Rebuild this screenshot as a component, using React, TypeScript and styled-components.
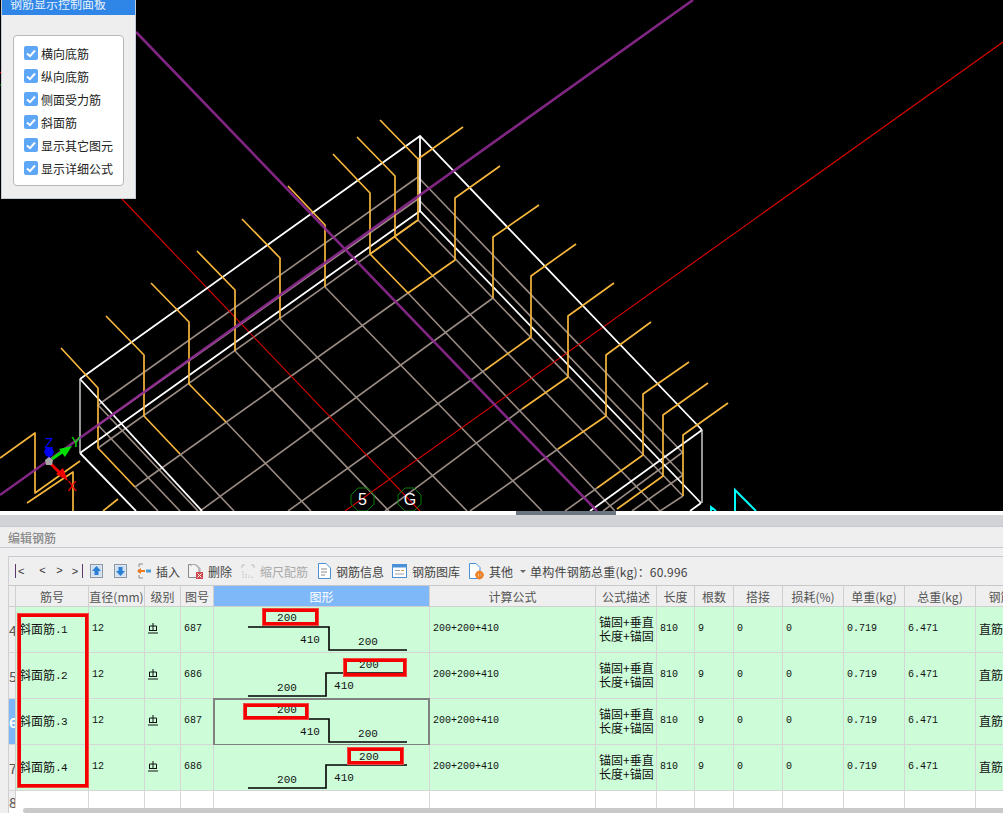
import React from "react";
import styled, { createGlobalStyle } from "styled-components";

const GlobalStyle = createGlobalStyle`
  html, body {
    margin: 0;
    padding: 0;
    height: 813px;
    overflow: hidden;
    background: #efefef;
    font-family: "Noto Sans CJK SC", "Liberation Sans", sans-serif;
  }
`;

const Page = styled.div`
  width: 1003px;
  height: 813px;
  overflow: hidden;
  display: flex;
  flex-direction: column;
`;

const Viewport = styled.div`
  position: relative;
  height: 511px;
  background: #000;
  flex: none;

  svg {
    display: block;
  }
`;

const ControlPanel = styled.div`
  position: absolute;
  left: 1px;
  top: 0;
  width: 135px;
  height: 199px;
  box-sizing: border-box;
  background: #eeeeee;
  border: 1px solid #c4cad2;
  border-top: none;
  display: flex;
  flex-direction: column;
`;

const PanelTitle = styled.div`
  height: 15px;
  flex: none;
  background: #2f86e6;
  color: #e8f2fc;
  font-size: 12px;
  line-height: 7px;
  padding-left: 8px;
  overflow: hidden;
`;

const OptionGroup = styled.div`
  margin: 20px 11px 0 11px;
  height: 151px;
  box-sizing: border-box;
  background: #fff;
  border: 1px solid #b8b8b8;
  border-radius: 4px;
  padding: 10px 0 0 10px;
  display: flex;
  flex-direction: column;
  gap: 9px;
`;

const OptionRow = styled.div`
  display: flex;
  align-items: center;
  gap: 3px;
  height: 14px;
  font-size: 12px;
  color: #222;
`;

const CheckBox = styled.span`
  width: 14px;
  height: 14px;
  border-radius: 2px;
  background: #5ea6f6;
  display: flex;
  align-items: center;
  justify-content: center;
`;

const Splitter = styled.div`
  height: 4px;
  flex: none;
  background: #fff;
  padding-left: 516px;
`;

const SplitterThumb = styled.div`
  width: 100px;
  height: 4px;
  background: #6c7680;
`;

const TitleGutter = styled.div`
  height: 11px;
  flex: none;
  background: #d2d3d7;
  border-bottom: 1px solid #c6c7cb;
`;

const EditorTitle = styled.div`
  height: 21px;
  flex: none;
  box-sizing: border-box;
  padding-left: 8px;
  font-size: 12px;
  line-height: 21px;
  font-weight: 500;
  color: #8a8a8a;
  border-bottom: 1px solid #c8c8d0;
`;

const Editor = styled.div`
  flex: 1;
  margin: 8px 0 0 8px;
  background: #efefef;
  border-top: 1px solid #c8c8d0;
  border-left: 1px solid #d0d0d4;
  position: relative;
  overflow: hidden;
`;

const Toolbar = styled.div`
  height: 28px;
  display: flex;
  align-items: center;
  font-size: 12px;
  color: #444;
  white-space: nowrap;
`;

const NavGroup = styled.div`
  display: flex;
  width: 72px;
  margin-left: 6px;
  font-family: "Liberation Sans", sans-serif;
  font-size: 11px;
  color: #333;
`;

const NavButton = styled.span`
  width: 17px;
  text-align: center;

  &:first-child {
    border-left: 1px solid #5a3a6a;
    line-height: 14px;
    width: 12px;
    text-align: left;
    padding-left: 2px;
    margin-right: 4px;
  }

  &:last-child {
    width: 14px;
    border-right: 1px solid #5a3a6a;
    line-height: 14px;
  }
`;

const ToolButton = styled.span<{ $gap: number; $disabled?: boolean }>`
  display: inline-flex;
  align-items: center;
  margin-left: ${(p) => p.$gap}px;
  gap: 5px;
  color: ${(p) => (p.$disabled ? "#aaaaaa" : "#444")};

  svg {
    flex: none;
    display: block;
  }
`;

const Caret = styled.span`
  width: 0;
  height: 0;
  margin-left: 7px;
  border-left: 3px solid transparent;
  border-right: 3px solid transparent;
  border-top: 3px solid #666;
`;

const WeightLabel = styled.span`
  margin-left: 4px;
  letter-spacing: 0.2px;
`;

const Table = styled.div`
  border-top: 1px solid #c8c8c8;
  width: 1040px;
`;

const columns = "7px 73px 56px 36px 33px 216px 166px 61px 38px 39px 49px 61px 61px 71px 50px";

const Row = styled.div<{ $height: number; $header?: boolean }>`
  display: grid;
  grid-template-columns: ${columns};
  height: ${(p) => p.$height}px;
  border-bottom: ${(p) => (p.$header ? "1px solid #cfcfcf" : "1px solid #d6d6d6")};
  box-sizing: content-box;
`;

const HeadCell = styled.div<{ $active?: boolean }>`
  box-sizing: border-box;
  display: flex;
  align-items: center;
  justify-content: center;
  font-size: 12px;
  white-space: nowrap;
  overflow: hidden;
  color: ${(p) => (p.$active ? "#fff" : "#555")};
  background: ${(p) => (p.$active ? "#7fb8f8" : "#efefef")};
  border-right: 1px solid #cfcfcf;
`;

const RowNumber = styled.div<{ $active?: boolean }>`
  box-sizing: border-box;
  display: flex;
  align-items: center;
  font-size: 14px;
  font-weight: ${(p) => (p.$active ? 700 : 400)};
  overflow: hidden;
  color: ${(p) => (p.$active ? "#fff" : "#555")};
  background: ${(p) => (p.$active ? "#7fb8f8" : "#efefef")};
  border-right: 1px solid #cfcfcf;
`;

const Cell = styled.div<{ $empty?: boolean; $mono?: boolean }>`
  box-sizing: border-box;
  position: relative;
  display: flex;
  align-items: center;
  padding: 0 0 2px 3px;
  font-family: ${(p) =>
    p.$mono ? '"Liberation Mono", monospace' : '"Noto Sans CJK SC", sans-serif'};
  font-size: ${(p) => (p.$mono ? "10px" : "12px")};
  line-height: 14px;
  color: #111;
  white-space: nowrap;
  background: ${(p) => (p.$empty ? "#fff" : "#ccfdd8")};
  border-right: 1px solid #d6d6d6;
`;

const ShapeCell = styled(Cell)`
  padding: 0;

  svg {
    position: absolute;
    left: 0;
    top: 0;
  }
`;

const SelectedFrame = styled.div`
  position: absolute;
  left: -1px;
  top: -1px;
  right: -1px;
  bottom: -2px;
  border: 2px solid #808080;
`;

const NameDot = styled.span`
  font-family: "Liberation Mono", monospace;
  font-size: 11px;
  letter-spacing: -0.6px;
  position: relative;
  top: 1px;
`;

const RedMark = styled.div<{ $x: number; $y: number; $w: number; $h: number; $bw: number }>`
  position: absolute;
  left: ${(p) => p.$x}px;
  top: ${(p) => p.$y}px;
  width: ${(p) => p.$w}px;
  height: ${(p) => p.$h}px;
  box-sizing: border-box;
  border: ${(p) => p.$bw}px solid #f40000;
  outline: 1px solid rgba(240, 120, 110, 0.6);
  outline-offset: -1px;
`;

const ScrollTrack = styled.div`
  position: absolute;
  left: 0;
  right: 0;
  bottom: 0;
  height: 5px;
  background: #fff;
`;

const ScrollThumb = styled.div`
  height: 5px;
  margin-left: 14px;
  background: #c9c9c9;
  border-radius: 3px 0 0 3px;
`;

const GRAY = [
  "418,177 98,405",
  "418,199 98,425",
  "418,220 98,448",
  "408,293 135,487",
  "493,298 200,511",
  "485,370 288,511",
  "522,409 385,511",
  "558,449 470,511",
  "597,488 565,511",
  "683,452 603,511",
  "683,475 632,511",
  "683,496 660,511",
  "135,487 158,511",
  "180,454 234,511",
  "226,422 311,511",
  "235,351 389,511",
  "280,319 467,511",
  "325,287 542,511",
  "408,293 615,511",
  "432,275 660,511",
  "418,177 683,453",
  "418,199 683,475",
  "418,220 683,496",
  "98,405 198,511",
  "98,425 180,511",
];

const WHITE = [
  "80,379 420,136 702,430",
  "80,453 420,211 701,503",
  "420,136 420,211",
  "80,379 202,511",
  "80,453 136,511",
  "702,430 590,511",
  "701,503 690,511",
];

const ORANGE = [
  "61,348 98,388 98,448 135,487",
  "106,316 144,355 144,416 180,454",
  "151,283 189,322 189,384 226,422",
  "197,251 235,290 235,351",
  "242,219 280,258 280,319",
  "288,186 325,225 325,287",
  "333,154 370,193 370,254 408,293",
  "357,137 395,176 395,237 432,275",
  "380,120 418,159 418,220 370,254",
  "463,127 418,159",
  "500,166 455,198 455,260 408,293",
  "539,205 493,237 493,298",
  "576,244 531,276 531,337 485,370",
  "614,283 568,316 568,377 522,409",
  "651,322 606,355 606,416 558,449",
  "689,362 643,394 643,455 597,488",
  "708,383 663,415 663,476 617,509",
  "728,403 683,435 683,496",
  "0,458 35,433 35,493 80,461",
  "27,503 73,472 73,511",
  "103,511 118,499",
];

const Scene = () => (
  <svg width={1003} height={511} viewBox="0 0 1003 511" fill="none">
    <g stroke="#9a8c84" strokeWidth={1.6}>
      {GRAY.map((d) => (
        <polyline key={d} points={d} />
      ))}
    </g>
    <g stroke="#e00000" strokeWidth={1.1}>
      <line x1={122} y1={199} x2={420} y2={511} />
      <line x1={1003} y1={42} x2={345} y2={511} />
      <line x1={0} y1={72} x2={2} y2={74} />
    </g>
    <line x1={0} y1={85} x2={2} y2={85} stroke="#00b000" />
    <g stroke="#fff" strokeWidth={1.8}>
      {WHITE.map((d) => (
        <polyline key={d} points={d} />
      ))}
    </g>
    <g stroke="#e8e8e8" strokeWidth={1.3}>
      <line x1={80} y1={379} x2={80} y2={453} />
      <line x1={702} y1={430} x2={702} y2={503} />
    </g>
    <g stroke="#f6b63c" strokeWidth={1.7} strokeLinejoin="round">
      {ORANGE.map((d) => (
        <polyline key={d} points={d} />
      ))}
    </g>
    <g stroke="#8f2a92" strokeWidth={2.6} opacity={0.9}>
      <line x1={0} y1={495} x2={693} y2={0} />
      <line x1={136} y1={32} x2={597} y2={511} />
    </g>
    <g stroke="#00ffff" strokeWidth={2}>
      <polyline points="735,511 735,490 756,511" />
      <polyline points="711,511 711,507 716,511" />
    </g>

    <g stroke="#0a7a0a" strokeWidth={1}>
      <polygon points="358,488 367,488 374,495 374,504 367,511 358,511 351,504 351,495" />
      <polygon points="405,488 414,488 421,495 421,504 414,511 405,511 398,504 398,495" />
    </g>
    <g fill="#fff" fontFamily="'Liberation Sans', sans-serif" fontSize={16} textAnchor="middle">
      <text x={362.5} y={505}>5</text>
      <text x={410} y={505}>G</text>
    </g>

    <line x1={49} y1={458} x2={49} y2={450} stroke="#0000f0" strokeWidth={3} />
    <polygon points="44,452 46,447 52,447 54,452 52,456 46,456" fill="#0000f0" />
    <line x1={52} y1={459} x2={62} y2={452} stroke="#00e000" strokeWidth={3} />
    <polygon points="59,449 72,446 65,457" fill="#00e000" />
    <line x1={51} y1={464} x2={60} y2={473} stroke="#f00000" strokeWidth={3} />
    <polygon points="56,474 63,468 68,481" fill="#f00000" />
    <polygon points="45,460 49,457 53,460 52,465 46,465" fill="#a8a8a8" />
    <g fontFamily="'Liberation Sans', sans-serif" fontSize={14} textAnchor="middle">
      <text x={49} y={448} fill="#0000f0">Z</text>
      <text x={76} y={447} fill="#00e000">Y</text>
      <text x={72} y={491} fill="#f00000">X</text>
    </g>
  </svg>
);

const options = ["横向底筋", "纵向底筋", "侧面受力筋", "斜面筋", "显示其它图元", "显示详细公式"];

const Tick = () => (
  <svg width={10} height={9} viewBox="0 0 10 9" fill="none">
    <path d="M1 4.5 L4 7.2 L9 1.5" stroke="#fff" strokeWidth={2} />
  </svg>
);

const ArrowBoxIcon = ({ down }: { down?: boolean }) => (
  <svg width={13} height={14} viewBox="0 0 13 14">
    <rect x={0.5} y={0.5} width={12} height={13} fill="#dfe6ee" stroke="#8a97a6" />
    <rect x={2} y={2} width={9} height={10} fill="#cfe0f2" />
    <path
      d={down ? "M6.5 12 L2 7 H4.5 V3 H8.5 V7 H11 Z" : "M6.5 2 L11 7 H8.5 V11 H4.5 V7 H2 Z"}
      fill="#2a7fd4"
    />
  </svg>
);

const InsertIcon = () => (
  <svg width={14} height={16} viewBox="0 0 14 16" fill="none">
    <path d="M6 1 H2 V4 M2 6 V10 M2 12 V15 H6" stroke="#8a8a8a" />
    <path d="M0 8 L4 5 V7 H8 V9 H4 V11 Z" fill="#ee7a1a" />
    <rect x={9} y={6.5} width={5} height={3} fill="#4a9ad8" />
  </svg>
);

const DeleteIcon = () => (
  <svg width={16} height={16} viewBox="0 0 16 16" fill="none">
    <path d="M1.5 1.5 H8 L12 5 V14.5 H1.5 Z" fill="#f4f4f4" stroke="#8a8a8a" />
    <path d="M4 3.5 V1.5 H9 L13 5.5 V9" stroke="#aaa" />
    <rect x={9} y={9} width={7} height={7} fill="#d0484c" />
    <path d="M10.5 10.5 L14.5 14.5 M14.5 10.5 L10.5 14.5" stroke="#fff" />
  </svg>
);

const ScaleIcon = () => (
  <svg width={14} height={15} viewBox="0 0 14 15" fill="none" stroke="#bdbdbd">
    <path d="M1 4 V1 H4 M10 1 H13 V4" />
    <path d="M2 14 V7 M5 14 V9 M8 14 V11 M11 14 V12" strokeDasharray="1.5 1" />
  </svg>
);

const DocIcon = () => (
  <svg width={13} height={16} viewBox="0 0 13 16" fill="none">
    <path d="M0.5 0.5 H8 L12.5 5 V15.5 H0.5 Z" fill="#fff" stroke="#4a90d8" />
    <path d="M3 6 H9 M3 9 H9 M3 12 H7" stroke="#8a8a8a" />
  </svg>
);

const LibraryIcon = () => (
  <svg width={15} height={14} viewBox="0 0 15 14" fill="none">
    <rect x={0.5} y={0.5} width={14} height={13} fill="#fff" stroke="#4a90d8" />
    <rect x={0.5} y={0.5} width={14} height={3} fill="#4a90d8" />
    <path d="M3 6.5 H8 M3 10 H12" stroke="#a0a0a0" />
    <path d="M9 6.5 H12" stroke="#e0a040" />
  </svg>
);

const OtherIcon = () => (
  <svg width={15} height={17} viewBox="0 0 15 17" fill="none">
    <path d="M0.5 0.5 H7 L11 4.5 V15.5 H0.5 Z" fill="#fff" stroke="#4a90d8" />
    <circle cx={10.5} cy={12} r={3} fill="none" stroke="#f08020" strokeWidth={2.4} />
    <path d="M10.5 7.5 V16.5 M6 12 H15" stroke="#f08020" />
  </svg>
);

const GradeMark = () => (
  <svg width={10} height={11} viewBox="0 0 10 11" fill="none" stroke="#111">
    <path d="M1.5 8 V3 H8.5 V8 M1.5 7.5 H8.5 M5 0 V8 M0 10 H10" />
  </svg>
);

const RebarShape = ({ flipped }: { flipped?: boolean }) => {
  const points = flipped ? "34,43 112,43 112,20 193,20" : "34,20 115,20 115,43 193,43";
  const labels = flipped
    ? [
        { x: 73, y: 38, t: "200" },
        { x: 130, y: 36, t: "410" },
        { x: 155, y: 15, t: "200" },
      ]
    : [
        { x: 73, y: 14, t: "200" },
        { x: 96, y: 36, t: "410" },
        { x: 154, y: 38, t: "200" },
      ];
  return (
    <svg width={215} height={45} viewBox="0 0 215 45" fill="none">
      <polyline points={points} stroke="#000" strokeWidth={1.6} />
      {labels.map((l) => (
        <text
          key={l.x}
          x={l.x}
          y={l.y}
          fill="#111"
          fontFamily="'Liberation Mono', monospace"
          fontSize={11}
          textAnchor="middle"
        >
          {l.t}
        </text>
      ))}
    </svg>
  );
};

const headers = [
  "筋号", "直径(mm)", "级别", "图号", "图形", "计算公式", "公式描述", "长度",
  "根数", "搭接", "损耗(%)", "单重(kg)", "总重(kg)", "钢筋",
];

const rows = [
  { no: 4, name: "1", code: "687", flipped: false },
  { no: 5, name: "2", code: "686", flipped: true },
  { no: 6, name: "3", code: "687", flipped: false, selected: true },
  { no: 7, name: "4", code: "686", flipped: true },
];

// annotation boxes, relative to the editor frame
const marks = [
  { x: 8, y: 56, w: 72, h: 175, bw: 4 },
  { x: 253, y: 51, w: 57, h: 18, bw: 4 },
  { x: 334, y: 101, w: 64, h: 19, bw: 4 },
  { x: 234, y: 146, w: 66, h: 17, bw: 4 },
  { x: 338, y: 190, w: 57, h: 18, bw: 4 },
];

const App = () => (
  <Page>
    <GlobalStyle />
    <Viewport>
      <Scene />
      <ControlPanel>
        <PanelTitle>钢筋显示控制面板</PanelTitle>
        <OptionGroup>
          {options.map((o) => (
            <OptionRow key={o}>
              <CheckBox>
                <Tick />
              </CheckBox>
              {o}
            </OptionRow>
          ))}
        </OptionGroup>
      </ControlPanel>
    </Viewport>
    <Splitter>
      <SplitterThumb />
    </Splitter>
    <TitleGutter />
    <EditorTitle>编辑钢筋</EditorTitle>
    <Editor>
      <Toolbar>
        <NavGroup>
          <NavButton>&lt;</NavButton>
          <NavButton>&lt;</NavButton>
          <NavButton>&gt;</NavButton>
          <NavButton>&gt;</NavButton>
        </NavGroup>
        <ToolButton $gap={3}>
          <ArrowBoxIcon />
        </ToolButton>
        <ToolButton $gap={11}>
          <ArrowBoxIcon down />
        </ToolButton>
        <ToolButton $gap={10}>
          <InsertIcon />
          插入
        </ToolButton>
        <ToolButton $gap={7}>
          <DeleteIcon />
          删除
        </ToolButton>
        <ToolButton $gap={9} $disabled>
          <ScaleIcon />
          缩尺配筋
        </ToolButton>
        <ToolButton $gap={10}>
          <DocIcon />
          钢筋信息
        </ToolButton>
        <ToolButton $gap={8}>
          <LibraryIcon />
          钢筋图库
        </ToolButton>
        <ToolButton $gap={9}>
          <OtherIcon />
          其他
        </ToolButton>
        <Caret />
        <WeightLabel>单构件钢筋总重(kg)：60.996</WeightLabel>
      </Toolbar>
      <Table>
        <Row $height={20} $header>
          <HeadCell />
          {headers.map((h) => (
            <HeadCell key={h} $active={h === "图形"}>
              {h}
            </HeadCell>
          ))}
        </Row>
        {rows.map((r) => (
          <Row key={r.no} $height={45}>
            <RowNumber $active={r.selected}>{r.no}</RowNumber>
            <Cell>
              斜面筋<NameDot>.{r.name}</NameDot>
            </Cell>
            <Cell $mono>12</Cell>
            <Cell>
              <GradeMark />
            </Cell>
            <Cell $mono>{r.code}</Cell>
            <ShapeCell>
              <RebarShape flipped={r.flipped} />
              {r.selected && <SelectedFrame />}
            </ShapeCell>
            <Cell $mono>200+200+410</Cell>
            <Cell>
              <span>
                锚固+垂直
                <br />
                长度+锚固
              </span>
            </Cell>
            <Cell $mono>810</Cell>
            <Cell $mono>9</Cell>
            <Cell $mono>0</Cell>
            <Cell $mono>0</Cell>
            <Cell $mono>0.719</Cell>
            <Cell $mono>6.471</Cell>
            <Cell>直筋</Cell>
          </Row>
        ))}
        <Row $height={22}>
          <RowNumber>8</RowNumber>
          {headers.map((h) => (
            <Cell key={h} $empty />
          ))}
        </Row>
      </Table>
      {marks.map((m) => (
        <RedMark key={m.x} $x={m.x} $y={m.y} $w={m.w} $h={m.h} $bw={m.bw} />
      ))}
      <ScrollTrack>
        <ScrollThumb />
      </ScrollTrack>
    </Editor>
  </Page>
);

export default App;
